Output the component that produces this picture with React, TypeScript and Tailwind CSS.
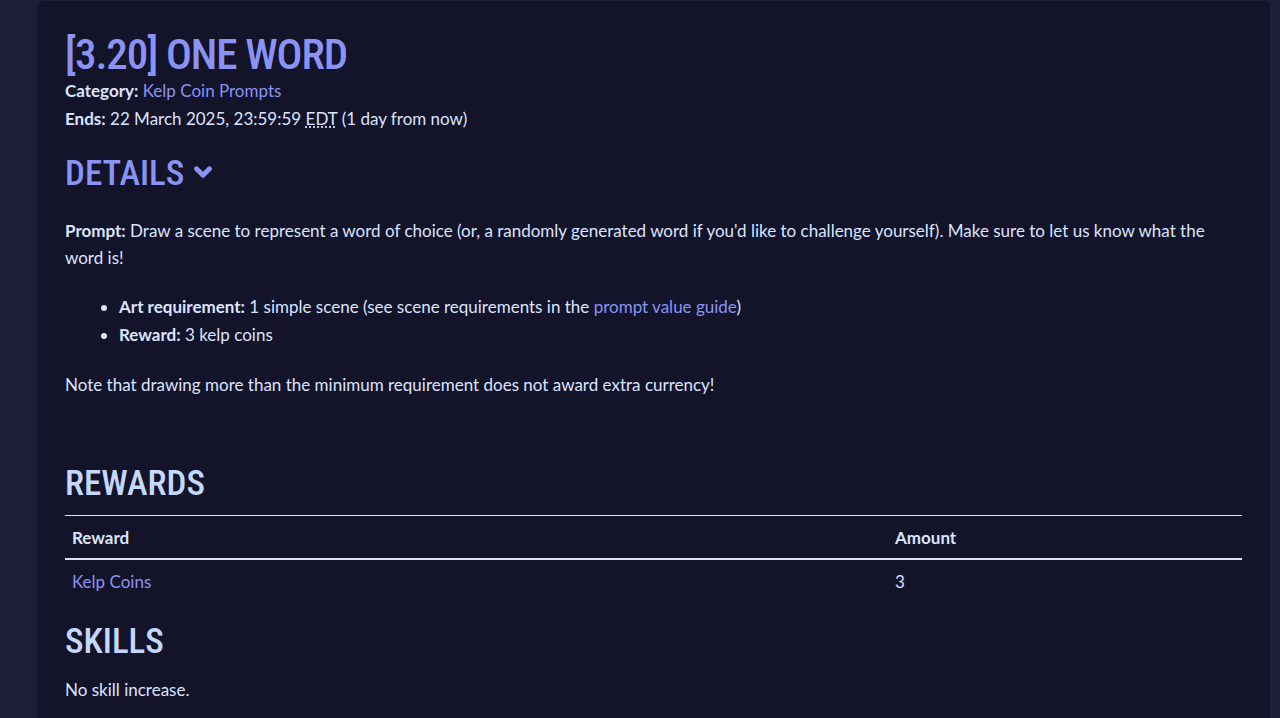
import { ChevronDown } from "lucide-react";

const heading = "[font-family:'Roboto_Condensed','DejaVu_Sans_Condensed',Roboto,sans-serif]";

export default function App() {
  return (
    <div className="min-h-screen bg-[#1d1d37] pl-[37px] pr-[10px] pt-px font-['Lato',sans-serif] text-[17px] text-[#dbe4ff]">
      <main className="min-h-[717px] rounded-t-md bg-[#13132a] px-[28px] pt-[30px] pb-8">
        <h1 className={`${heading} text-[43px] leading-[46px] font-medium tracking-tight text-[#8a93f3]`}>
          [3.20] ONE WORD
        </h1>
        <p className="leading-[28px]">
          <b>Category:</b> <a className="text-[#8a93f3]">Kelp Coin Prompts</a>
        </p>
        <p className="leading-[28px]">
          <b>Ends:</b> 22 March 2025, 23:59:59{" "}
          <abbr className="underline decoration-dotted underline-offset-2">EDT</abbr> (1 day from now)
        </p>

        <h2 className={`${heading} mt-[21px] flex items-center gap-[6px] text-[35px] leading-[40px] font-medium text-[#8a93f3]`}>
          DETAILS <ChevronDown size={26} strokeWidth={4.5} className="mt-[-4px]" />
        </h2>
        <p className="mt-[23px] leading-[27px]">
          <b>Prompt:</b> Draw a scene to represent a word of choice (or, a randomly generated word if you'd like to
          challenge yourself). Make sure to let us know what the word is!
        </p>
        <ul className="mt-[22px] list-disc pl-[54px] leading-[28px]">
          <li>
            <b>Art requirement:</b> 1 simple scene (see scene requirements in the{" "}
            <a className="text-[#8a93f3]">prompt value guide</a>)
          </li>
          <li>
            <b>Reward:</b> 3 kelp coins
          </li>
        </ul>
        <p className="mt-[22px] leading-[28px]">Note that drawing more than the minimum requirement does not award extra currency!</p>

        <h2 className={`${heading} mt-[65px] text-[35px] leading-[40px] font-medium text-[#c5d8fb]`}>REWARDS</h2>
        <table className="mt-[11px] w-full border-collapse">
          <thead>
            <tr className="border-t border-b-2 border-t-[#d9dcec] border-b-[#dfe1ee]">
              <th className="w-[823px] px-[7px] pt-[9px] pb-[7px] text-left leading-[26px] font-bold">Reward</th>
              <th className="px-[7px] pt-[9px] pb-[7px] text-left leading-[26px] font-bold">Amount</th>
            </tr>
          </thead>
          <tbody>
            <tr>
              <td className="px-[7px] py-[9px] leading-[26px] text-[#8a93f3]">Kelp Coins</td>
              <td className="px-[7px] py-[9px] leading-[26px]">3</td>
            </tr>
          </tbody>
        </table>

        <h2 className={`${heading} mt-[18px] text-[35px] leading-[40px] font-medium text-[#c5d8fb]`}>SKILLS</h2>
        <p className="mt-[14px] leading-[28px]">No skill increase.</p>
      </main>
    </div>
  );
}
